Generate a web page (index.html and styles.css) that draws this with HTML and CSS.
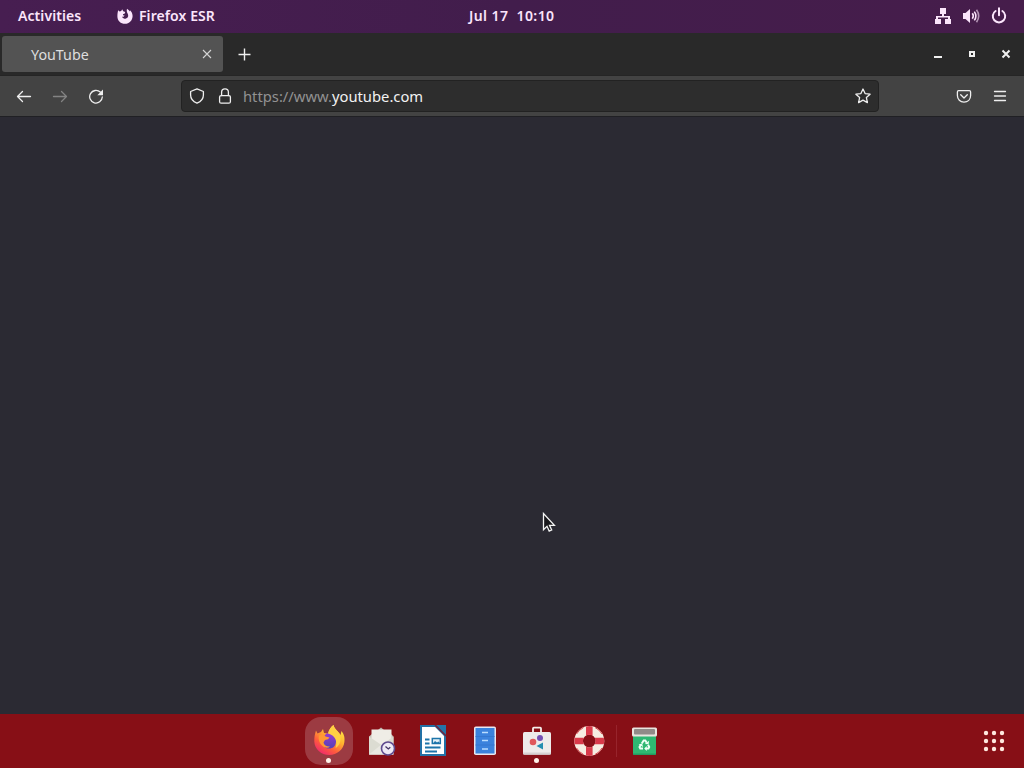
FILE: index.html
```html
<!DOCTYPE html>
<html lang="en">
<head>
    <meta charset="UTF-8">
    <meta name="viewport" content="width=device-width, initial-scale=1.0">
    <title>YouTube</title>
    <link rel="stylesheet" href="styles.css">
</head>
<body>
    <div class="desktop">
        <div class="panel">
            <span class="activities">Activities</span>
            <div class="app">
                <svg width="16" height="16" viewBox="0 0 16 16"><path d="M1.2 2.2 2.6 3.4 4.2 3 5.2 1.2 6.2 3.2 8.2 4 7.8 5.4 6 6.2 6 7.2 7.6 7.6 6.6 8.8 5 8.8C5.6 10.4 7.4 11 9 10.4 11.4 9.6 11.7 7.2 10.6 5.4 9.9 4.2 9.4 2.8 10 .8 11.3 1.6 12.2 2.7 12.6 3.4L13 2.2C14.6 3.6 15.6 5.8 15.6 8 15.6 12.4 12.2 15.8 8 15.8 3.8 15.8.4 12.5.4 8.4.4 6 .6 4 1.2 2.2z"/></svg>
                <span>Firefox ESR</span>
            </div>
            <span class="clock">Jul 17&nbsp; 10:10</span>
            <div class="status">
                <svg width="18" height="18" viewBox="0 0 18 18"><path d="M6 1h6v6h-2v2h6v3h1v5h-6v-5h3v-1.500H4V12h3v5H1v-5h1V9h6V7H6z"/></svg>
                <svg width="18" height="18" viewBox="0 0 18 18"><path d="M1 6h2.500L8 2v14l-4.500-4H1z"/><path class="line" d="M10.300 6.300q2 2.700 0 5.400M12.300 4.600q3.200 4.400 0 8.800"/><path class="line dim" d="M14.500 2.800q4.400 6.200 0 12.400"/></svg>
                <svg width="18" height="18" viewBox="0 0 18 18"><path class="line power" d="M5.600 4a6.200 6.200 0 1 0 6.800 0M9 1.200v7"/></svg>
            </div>
        </div>

        <div class="tabs">
            <div class="tab">
                <span>YouTube</span>
                <svg width="10" height="10" viewBox="0 0 10 10"><path d="m1 1 8 8M9 1 1 9"/></svg>
            </div>
            <svg class="new-tab" width="14" height="14" viewBox="0 0 14 14"><path d="M6.500 1.500v12M.5 7.500h12"/></svg>
            <div class="window-buttons">
                <svg width="10" height="10" viewBox="0 0 10 10"><path d="M1 8h8"/></svg>
                <svg width="10" height="10" viewBox="0 0 10 10"><path d="M3 3h4v4H3z"/></svg>
                <svg width="10" height="10" viewBox="0 0 10 10"><path d="m1.500 1.500 7 7M8.500 1.500l-7 7"/></svg>
            </div>
        </div>

        <div class="toolbar">
            <svg width="16" height="16" viewBox="0 0 16 16"><path d="M14.500 8.500h-13M6.500 3.500l-5 5 5 5"/></svg>
            <svg class="disabled" width="16" height="16" viewBox="0 0 16 16"><path d="M1.500 8.500h13M9.500 3.500l5 5-5 5"/></svg>
            <svg width="16" height="16" viewBox="0 0 16 16"><path d="M12.300 4.100A6.300 6.300 0 1 0 14.300 9"/><path class="fill" d="M15 1.500v5.700H9.300z"/></svg>
            <div class="urlbar">
                <svg width="16" height="16" viewBox="0 0 16 16"><path d="M8 .9 14.400 3.500V7c0 3.600-2.400 6.600-6.400 8.200C4 13.600 1.600 10.600 1.600 7V3.500z"/></svg>
                <svg width="16" height="16" viewBox="0 0 16 16"><rect x="2.600" y="7.600" width="10.800" height="7.600" rx="1.500"/><path d="M4.600 7.500V4.300a3.400 3.400 0 0 1 6.800 0v3.200"/></svg>
                <span class="url">https://www.<b>youtube.com</b></span>
                <svg class="star" width="16" height="16" viewBox="0 0 16 16"><path d="m8 1 2.100 4.600 5 .6-3.700 3.400 1 5L8 12.100l-4.400 2.500 1-5L.9 6.200l5-.6z"/></svg>
            </div>
            <svg class="pocket" width="16" height="16" viewBox="0 0 16 16"><path d="M2.600 2.700h10.800q1.200 0 1.200 1.200v3.600c0 4-2.800 6.600-6.600 6.600s-6.600-2.600-6.600-6.600V3.900q0-1.200 1.200-1.200zM4.700 6.800 8 10l3.300-3.200"/></svg>
            <svg width="16" height="16" viewBox="0 0 16 16"><path d="M2.500 3.500h11M2.500 8h11M2.500 12.500h11"/></svg>
        </div>

        <div class="page">
            <svg class="cursor" width="14" height="22" viewBox="0 0 14 22"><path d="M1.500 1.500v16.200l3.500-3.400 2.200 4.800 2.500-1.100-2.200-4.700h4.900z"/></svg>
        </div>

        <div class="dock">
            <div class="launchers">
                <!-- firefox -->
                <div class="item active running">
                    <svg width="48" height="48" viewBox="0 0 48 48">
                        <defs>
                            <linearGradient id="flame" x1=".85" y1="0" x2=".2" y2="1">
                                <stop offset="0" stop-color="#fff14a"/>
                                <stop offset=".4" stop-color="#ffb22e"/>
                                <stop offset=".7" stop-color="#ff5b3d"/>
                                <stop offset="1" stop-color="#ed2274"/>
                            </linearGradient>
                            <linearGradient id="globe" x1="0" y1="0" x2="0" y2="1">
                                <stop offset="0" stop-color="#963bd0"/>
                                <stop offset="1" stop-color="#5442b5"/>
                            </linearGradient>
                        </defs>
                        <path fill="url(#flame)" d="M11 13.500 12.500 16.500 16 15 18 12 19 16 23 16.500C24 12.500 26 10 28.500 8 29.500 12.500 33.500 14 35.500 18L36.500 14C39.500 18 39.800 21 39.400 25 38.500 32.500 32 38 24.300 38 16 38 9.600 32 9.300 24.500 9.200 20.500 9.800 17 11 13.500z"/>
                        <path fill="url(#globe)" d="M18.500 19.500 21.500 16.500C28 15 31.500 19 31 25 30.500 29.500 27.500 31.500 24 31.500 20.500 31.500 18 29.500 17.500 26.500z"/>
                        <path fill="#ff9933" d="M14 18.500 18.500 17 20.500 19.500 24.500 20.500 23 22.300 20 23 18.500 25.500C19 28.500 22 29.800 25 29.500 23 31.500 19.500 31 17 28.500 14.500 26 13 22 14 18.500z"/>
                        <path fill="#ffd044" d="M23 16.500C24 12.500 26 10 28.500 8 29.500 13 34.500 14 35.500 20 36 25 34 29 30.500 31 32.500 25 31 18.500 23 16.500z"/>
                    </svg>
                </div>
                <!-- evolution -->
                <div class="item">
                    <svg width="48" height="48" viewBox="0 0 48 48">
                        <path fill="#bdb7ac" d="m21 13 3-2.500 3 2.500z"/>
                        <path fill="#c9c5bb" d="M12 19.500l3-2.500h19l2.500 2.500V37.500H12z"/>
                        <path fill="#efede6" d="M14.500 12.500h20V32h-20z"/>
                        <path fill="#dcdcd2" d="m12 19.500 12.500 8.500 12-8.500v18H12z"/>
                        <path fill="#e9e8e1" d="m12 37.500 12.500-10 12 10z"/>
                        <circle cx="31" cy="31.500" r="6.500" fill="#eeeaf5" stroke="#5f4b8f" stroke-width="1.600"/>
                        <path fill="none" stroke="#453565" stroke-width="1.300" d="m28.500 29.500 2.800 2.500 2-1.800"/>
                    </svg>
                </div>
                <!-- writer -->
                <div class="item">
                    <svg width="48" height="48" viewBox="0 0 48 48">
                        <path fill="#fff" stroke="#2271a6" stroke-width="2" d="M12 9h14.500L36 18.500V38H12z"/>
                        <path fill="#2474a8" d="M27 8h10v10z"/>
                        <path stroke="#6b2843" stroke-width="1.500" d="m26 8 11 11"/>
                        <path fill="none" stroke="#1d75aa" stroke-width="1.800" d="M16 22.500h4.500M16 26.500h4.500M16 30.500h15.500M16 34.500h12"/>
                        <rect x="23.300" y="21.500" width="8" height="5" fill="#e4f0f6" stroke="#1d75aa" stroke-width="1.500"/>
                        <path fill="#1d75aa" d="m24 26.500 2-2.500 2 1.500 1.500-1 1.500 2z"/>
                    </svg>
                </div>
                <!-- files -->
                <div class="item">
                    <svg width="48" height="48" viewBox="0 0 48 48">
                        <rect x="13" y="9.500" width="22" height="28.500" rx="1.800" fill="#e9e7f1"/>
                        <path fill="#3b82dd" d="M14.500 11h19v25.500h-19z"/>
                        <path stroke="#3477d0" d="M14.500 19.500h19M14.500 28h19"/>
                        <path fill="none" stroke="#b9dcff" stroke-width="1.400" d="M21 15.500h6M21 23.500h6M21 32h6"/>
                    </svg>
                </div>
                <!-- software -->
                <div class="item running">
                    <svg width="48" height="48" viewBox="0 0 48 48">
                        <path fill="none" stroke="#f5eeea" stroke-width="1.800" d="M20 15v-3.500q0-.8.8-.8h6.400q.8 0 .8.800V15"/>
                        <rect x="10" y="15" width="28" height="22.500" rx="1.500" fill="#eeebea"/>
                        <path fill="#d6d1d1" d="M10 35.500h28v.8q0 1.500-1.500 1.500h-25q-1.500 0-1.500-1.500z"/>
                        <circle cx="27" cy="21" r="3" fill="#7550b4"/>
                        <circle cx="20" cy="25" r="3.300" fill="#e0585b"/>
                        <path fill="#258eb0" d="m23.500 29 6.500-3.500v7z"/>
                    </svg>
                </div>
                <!-- help -->
                <div class="item">
                    <svg width="48" height="48" viewBox="0 0 48 48">
                        <circle cx="24.300" cy="24" r="10.700" fill="none" stroke="#f6eee2" stroke-width="8.600"/>
                        <path fill="#d93a4a" d="M21 9.500q3.300-.8 6.600 0v9q-3.300-1.700-6.600 0zM21 29.500q3.300 1.700 6.600 0v9q-3.300.8-6.600 0zM9.800 20.700h9q-1.700 3.300 0 6.600h-9q-.8-3.300 0-6.600zM29.800 20.700h9q.8 3.300 0 6.600h-9q1.700-3.300 0-6.600z"/>
                        <path fill="none" stroke="#db4a50" stroke-width="1" d="M11.500 17q2.500-4 7-6.500M30 10.500q4.500 2 7 6.500M11.500 31q2.500 4 7 6.500M30 37.500q4.500-2 7-6.500"/>
                    </svg>
                </div>
                <div class="separator"></div>
                <!-- trash -->
                <div class="item">
                    <svg width="48" height="48" viewBox="0 0 48 48">
                        <path fill="#2fb872" d="M12 17h23v19.500q0 1.500-1.500 1.500h-20q-1.500 0-1.500-1.500z"/>
                        <path fill="#249b61" d="M12 36.500h23q0 1.500-1.500 1.500h-20q-1.500 0-1.500-1.500z"/>
                        <rect x="11" y="10.500" width="25" height="9" rx="1.500" fill="#e9e5df"/>
                        <rect x="13" y="12" width="21" height="5.500" rx="1" fill="#918b88"/>
                        <path fill="none" stroke="#effff5" stroke-width="2" d="m20.800 26.500 1.900-3h1.600l1.400 2.300M27 27.800l1.200 2.200-.8 1.600H25M22 31.600h-2.700l-.8-1.600 1.200-2"/>
                        <path fill="#effff5" d="m23.800 27 3.800.300.400-3.600zM25.700 29v5l-2.500-2.500zM17.600 27.500l3.500-1 1 3.500z"/>
                    </svg>
                </div>
            </div>
            <svg class="show-apps" width="24" height="24" viewBox="0 0 24 24">
                <circle cx="4" cy="4" r="2.200"/><circle cx="12" cy="4" r="2.200"/><circle cx="20" cy="4" r="2.200"/>
                <circle cx="4" cy="12" r="2.200"/><circle cx="12" cy="12" r="2.200"/><circle cx="20" cy="12" r="2.200"/>
                <circle cx="4" cy="20" r="2.200"/><circle cx="12" cy="20" r="2.200"/><circle cx="20" cy="20" r="2.200"/>
            </svg>
        </div>
    </div>
</body>
</html>
```

FILE: styles.css
```css
*{
    margin:0;
    padding:0;
    box-sizing:border-box;
}
body{
    font-family:"Noto Sans", sans-serif;
    font-size:14px;
    overflow:hidden;
}
svg{
    display:block;
    flex:none;
}
.desktop{
    width:1024px;
    height:768px;
    display:flex;
    flex-direction:column;
    background-color:#2b2a33;
}

/* top panel */
.panel{
    height:33px;
    padding:0 16px 1px 18px;
    display:grid;
    grid-template-columns:99px 352px 1fr auto;
    align-items:center;
    background:linear-gradient(90deg, #471e51, #421d4c 50%, #461d4b);
    color:#fbe5fb;
    font-weight:600;
    font-size:14px;
    letter-spacing:.08px;
    white-space:nowrap;
}
.panel span{
    padding-bottom:2px;
}
.panel .clock{
    letter-spacing:.42px;
}
.app{
    display:flex;
    align-items:center;
    gap:6px;
}
.panel svg{
    fill:#fbe5fb;
}
.status{
    display:flex;
    gap:10px;
}
.panel .line{
    fill:none;
    stroke:#fbe5fb;
    stroke-width:1.6;
}
.panel .dim{
    opacity:.6;
}
.panel .power{
    stroke-width:2;
    stroke-linecap:round;
}

/* tab strip */
.tabs{
    height:43px;
    padding:3px 13px 4px 2px;
    display:flex;
    align-items:center;
    background-color:#292929;
    border-bottom:1px solid #252525;
}
.tab{
    width:221px;
    height:36px;
    padding:0 11px 0 29px;
    display:flex;
    align-items:center;
    justify-content:space-between;
    background-color:#535353;
    border-radius:3px;
    color:#dedede;
    font-size:14.3px;
}
.tab span{
    padding-top:2px;
}
.tab svg{
    fill:none;
    stroke:#d5d5d5;
    stroke-width:1.1;
}
.new-tab{
    margin-left:15px;
    stroke:#f0f0f0;
    stroke-width:1.4;
}
.window-buttons{
    display:flex;
    gap:24px;
    margin-left:auto;
}
.window-buttons svg{
    fill:none;
    stroke:#f0f0f0;
    stroke-width:2;
}

/* navigation */
.toolbar{
    height:41px;
    padding:0 16px;
    display:flex;
    align-items:center;
    gap:20px;
    background-color:#434343;
    border-bottom:1px solid #202024;
}
.toolbar svg{
    fill:none;
    stroke:#efefef;
    stroke-width:1.3;
    stroke-linecap:round;
    stroke-linejoin:round;
}
.toolbar .disabled{
    stroke:#838383;
}
.toolbar .fill{
    fill:#efefef;
    stroke:none;
}
.urlbar{
    width:698px;
    height:32px;
    margin-left:57px;
    padding:0 7px;
    display:flex;
    align-items:center;
    gap:12px;
    background-color:#2d2d2d;
    border:1px solid #222;
    border-radius:4px;
}
.url{
    margin-left:-2px;
    color:#929292;
    font-size:14.75px;
}
.url b{
    color:#f2f2f2;
    font-weight:400;
}
.star{
    margin-left:auto;
}
.pocket{
    margin-left:auto;
}

.page{
    flex:1;
    position:relative;
}
.cursor{
    position:absolute;
    left:542px;
    top:395px;
    fill:#18171b;
    stroke:#f4f4f4;
    stroke-width:1.3;
}

/* dock */
.dock{
    height:54px;
    padding:0 18px 0 305px;
    display:flex;
    align-items:center;
    justify-content:space-between;
    background-color:#870f16;
}
.launchers{
    display:flex;
    align-items:center;
    gap:4px;
}
.item{
    width:48px;
    height:48px;
    position:relative;
}
.active{
    background-color:#9c3b42;
    border-radius:16px;
}
.running::after{
    content:"";
    position:absolute;
    left:21px;
    bottom:2px;
    width:5px;
    height:5px;
    border-radius:50%;
    background-color:#fff1e8;
}
.separator{
    width:1px;
    height:32px;
    margin:0 0 0 -1px;
    background-color:#97242c;
}
.show-apps{
    fill:#ffe8df;
}
```
